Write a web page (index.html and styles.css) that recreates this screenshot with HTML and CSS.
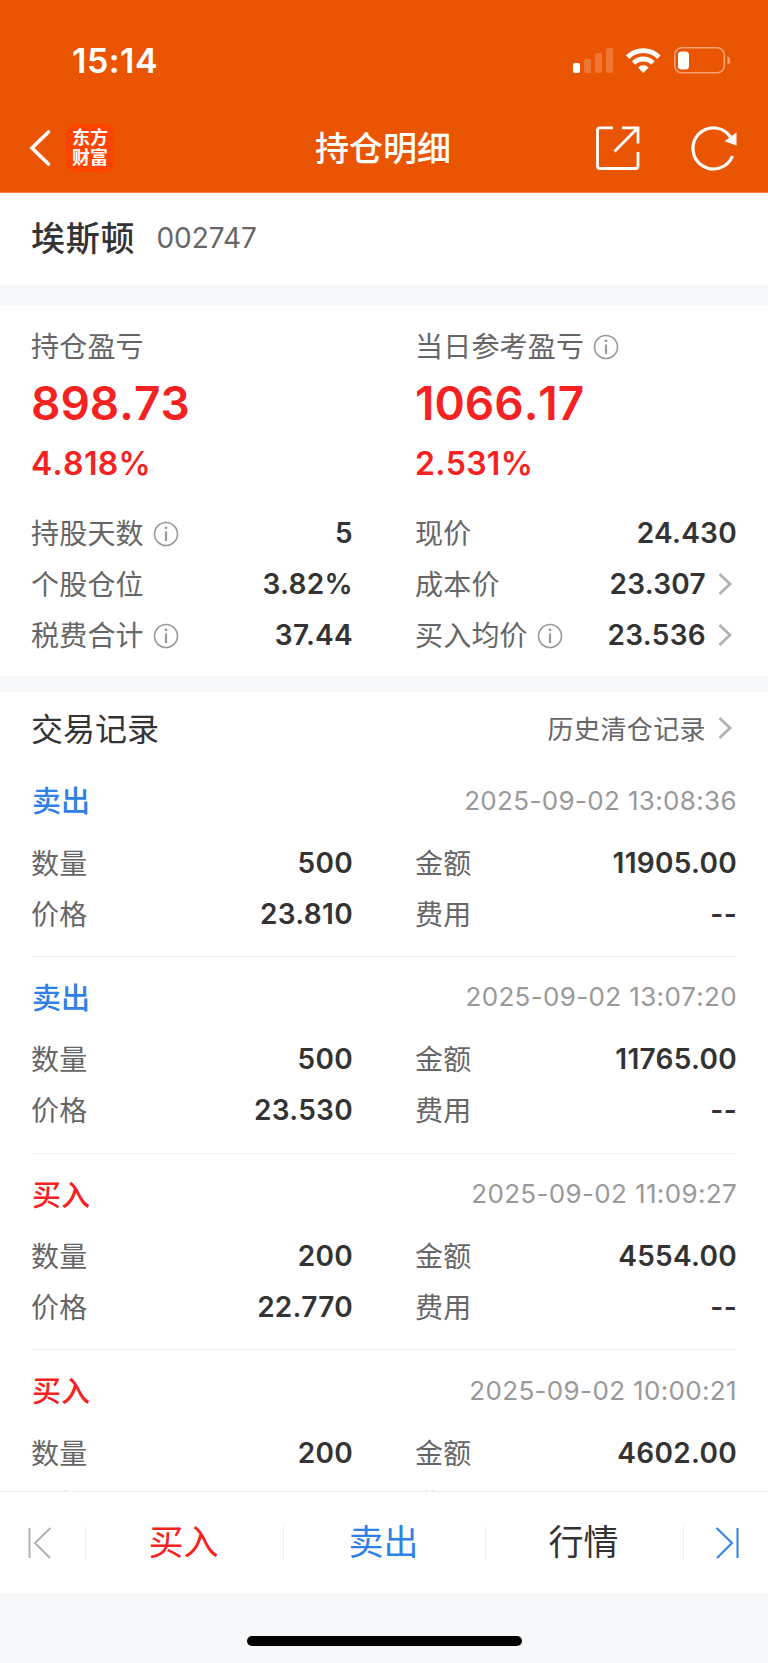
FILE: index.html
```
<!DOCTYPE html>
<html lang="zh-CN">
<head>
    <meta charset="UTF-8">
    <meta name="viewport" content="width=device-width, initial-scale=1.0">
    <title>持仓明细</title>
    <link rel="stylesheet" href="styles.css">
</head>
<body>
    <!-- Shared icons -->
    <svg class="defs" width="0" height="0">
        <symbol id="info" viewBox="0 0 26 26">
            <circle cx="13" cy="13" r="11.5" fill="none" stroke="#999" stroke-width="1.6"/>
            <path d="M13 10.5V20" stroke="#999" stroke-width="2.2"/>
            <circle cx="13" cy="6.8" r="1.4" fill="#999"/>
        </symbol>
        <symbol id="arrow" viewBox="0 0 14 24">
            <path d="M1.5 2L12 12L1.5 22" fill="none" stroke="#b2b2b2" stroke-width="2.8"/>
        </symbol>
    </svg>

    <div class="app">
        <header class="header">
            <div class="status">
                <span class="time">15:14</span>
                <svg class="status-icons" width="160" height="30" viewBox="0 0 160 30">
                    <g fill="#fff">
                        <rect x="3" y="17" width="7" height="10" rx="2"/>
                        <g opacity=".2">
                            <rect x="14" y="13" width="7" height="14" rx="2"/>
                            <rect x="25" y="7" width="7" height="20" rx="2"/>
                            <rect x="36" y="2" width="7" height="25" rx="2"/>
                        </g>
                        <path d="M56 9.3A24.5 24.5 0 0 1 90.6 9.3L87.2 12.9A19.5 19.5 0 0 0 59.4 12.9Z"/>
                        <path d="M61.9 15.3A16 16 0 0 1 84.7 15.3L81.3 18.8A11.3 11.3 0 0 0 65.3 18.8Z"/>
                        <path d="M68 21.5A7.5 7.5 0 0 1 78.6 21.5L73.3 27Z"/>
                        <rect x="108" y="5.5" width="11" height="18" rx="3.5"/>
                        <path d="M157.5 10.5a4.2 4.2 0 0 1 0 8z" opacity=".45"/>
                    </g>
                    <rect x="104.8" y="1.8" width="49.5" height="25" rx="7" fill="none" stroke="#fff" stroke-width="1.6" opacity=".45"/>
                </svg>
            </div>
            <div class="nav">
                <svg class="back" width="24" height="38" viewBox="0 0 24 38">
                    <path d="M20.5 3L4 19L20.5 35" fill="none" stroke="#fff" stroke-width="3.6" stroke-linecap="round"/>
                </svg>
                <div class="logo">东方<br>财富</div>
                <h1>持仓明细</h1>
                <div class="nav-btns">
                    <svg width="46" height="46" viewBox="0 0 46 46">
                        <g fill="none" stroke="#fff" stroke-width="2.8">
                            <path d="M19 2.8H6Q3.5 2.8 3.5 5.3V41Q3.5 43.5 6 43.5H41.5Q44 43.5 44 41V27"/>
                            <path d="M28 2.8H44V18.5M44 2.8L20.5 26.5"/>
                        </g>
                    </svg>
                    <svg width="50" height="48" viewBox="0 0 50 48">
                        <path d="M42.5 32A20.5 20.5 0 1 1 40.5 13" fill="none" stroke="#fff" stroke-width="3.2"/>
                        <path d="M34.5 17.2L46.5 8.5V21.5Z" fill="#fff"/>
                    </svg>
                </div>
            </div>
        </header>

        <section class="stock">
            <h2>埃斯顿</h2>
            <span class="code">002747</span>
        </section>

        <!-- Position summary -->
        <section class="summary">
            <div class="cols">
                <div>
                    <div class="label">持仓盈亏</div>
                    <div class="profit">898.73</div>
                    <div class="rate">4.818%</div>
                </div>
                <div>
                    <div class="label">当日参考盈亏<svg class="info"><use href="#info"/></svg></div>
                    <div class="profit">1066.17</div>
                    <div class="rate">2.531%</div>
                </div>
            </div>
            <div class="cols">
                <div class="row"><span class="label">持股天数<svg class="info"><use href="#info"/></svg></span><b>5</b></div>
                <div class="row"><span class="label">现价</span><b>24.430</b></div>
                <div class="row"><span class="label">个股仓位</span><b>3.82%</b></div>
                <div class="row"><span class="label">成本价</span><b>23.307</b><svg class="arrow"><use href="#arrow"/></svg></div>
                <div class="row"><span class="label">税费合计<svg class="info"><use href="#info"/></svg></span><b>37.44</b></div>
                <div class="row"><span class="label">买入均价<svg class="info"><use href="#info"/></svg></span><b>23.536</b><svg class="arrow"><use href="#arrow"/></svg></div>
            </div>
        </section>

        <!-- Trade records -->
        <section class="records">
            <div class="records-head">
                <h3>交易记录</h3>
                <span class="history">历史清仓记录</span>
                <svg class="arrow"><use href="#arrow"/></svg>
            </div>

            <div class="trade">
                <div class="trade-head"><span class="sell">卖出</span><time>2025-09-02 13:08:36</time></div>
                <div class="cols">
                    <div class="row"><span class="label">数量</span><b>500</b></div>
                    <div class="row"><span class="label">金额</span><b>11905.00</b></div>
                    <div class="row"><span class="label">价格</span><b>23.810</b></div>
                    <div class="row"><span class="label">费用</span><b>--</b></div>
                </div>
            </div>

            <div class="trade">
                <div class="trade-head"><span class="sell">卖出</span><time>2025-09-02 13:07:20</time></div>
                <div class="cols">
                    <div class="row"><span class="label">数量</span><b>500</b></div>
                    <div class="row"><span class="label">金额</span><b>11765.00</b></div>
                    <div class="row"><span class="label">价格</span><b>23.530</b></div>
                    <div class="row"><span class="label">费用</span><b>--</b></div>
                </div>
            </div>

            <div class="trade">
                <div class="trade-head"><span class="buy">买入</span><time>2025-09-02 11:09:27</time></div>
                <div class="cols">
                    <div class="row"><span class="label">数量</span><b>200</b></div>
                    <div class="row"><span class="label">金额</span><b>4554.00</b></div>
                    <div class="row"><span class="label">价格</span><b>22.770</b></div>
                    <div class="row"><span class="label">费用</span><b>--</b></div>
                </div>
            </div>

            <div class="trade">
                <div class="trade-head"><span class="buy">买入</span><time>2025-09-02 10:00:21</time></div>
                <div class="cols">
                    <div class="row"><span class="label">数量</span><b>200</b></div>
                    <div class="row"><span class="label">金额</span><b>4602.00</b></div>
                    <div class="row"><span class="label">价格</span><b></b></div>
                    <div class="row"><span class="label">费用</span><b></b></div>
                </div>
            </div>
        </section>

        <!-- Bottom bar -->
        <footer class="tabs">
            <div class="tab first">
                <svg width="26" height="32" viewBox="0 0 26 32">
                    <path d="M2.5 1V31M23.5 1L8 16L23 31" fill="none" stroke="#b2b2b2" stroke-width="2"/>
                </svg>
            </div>
            <div class="tab buy">买入</div>
            <div class="tab sell">卖出</div>
            <div class="tab">行情</div>
            <div class="tab last">
                <svg width="26" height="32" viewBox="0 0 26 32">
                    <path d="M23.5 1V31M2.5 1L18 16L3 31" fill="none" stroke="#2f80e7" stroke-width="2"/>
                </svg>
            </div>
        </footer>
        <div class="home"><div class="home-bar"></div></div>
    </div>
</body>
</html>
```

FILE: styles.css
```
* {
    box-sizing: border-box;
}
body {
    margin: 0;
    font-family: Inter, "Noto Sans CJK SC", sans-serif;
    color: #333;
    background-color: #f7f8fa;
}
h1, h2, h3 {
    margin: 0;
    font-weight: 500;
}
svg {
    display: block;
    flex: none;
}
.defs {
    position: absolute;
}
.app {
    width: 768px;
    height: 1663px;
    display: flex;
    flex-direction: column;
    overflow: hidden;
}

/* Header */
.header {
    flex: none;
    height: 193px;
    background-color: #ea5504;
    border-bottom: 1px solid #f07f42;
    color: #fff;
}
.status {
    height: 104px;
    padding: 18px 38px 0 72px;
    display: flex;
    align-items: center;
    justify-content: space-between;
}
.time {
    font-size: 34px;
    font-weight: 600;
    line-height: 40px;
    letter-spacing: 0.5px;
}
.status-icons {
    margin-top: -1px;
}
.nav {
    height: 88px;
    padding: 0 28px;
    display: grid;
    grid-template-columns: 38px 100px 1fr 146px;
    align-items: center;
}
.logo {
    width: 48px;
    height: 48px;
    border-radius: 9px;
    background-color: #ff4400;
    font-size: 18px;
    line-height: 20px;
    font-weight: 700;
    text-align: center;
    padding-top: 4px;
}
.nav h1 {
    font-size: 34px;
    line-height: 48px;
    padding: 2px 0 0 149px;
    white-space: nowrap;
}
.nav-btns {
    display: flex;
    justify-content: space-between;
    align-items: center;
}

/* Stock name */
.stock {
    flex: none;
    height: 92px;
    padding: 0 31px;
    display: flex;
    align-items: center;
    background-color: #fff;
}
.stock h2 {
    font-size: 34px;
    line-height: 48px;
    letter-spacing: 0.8px;
}
.code {
    margin: 0 0 2px 21px;
    font-size: 28px;
    color: #666;
}

/* Summary */
.summary {
    flex: none;
    height: 371px;
    margin: 20px 0 16px;
    padding: 18px 31px 0;
    background-color: #fff;
}
.cols {
    display: grid;
    grid-template-columns: 1fr 1fr;
    column-gap: 62px;
}
.label {
    display: flex;
    align-items: center;
    font-size: 28px;
    line-height: 48px;
    letter-spacing: 0.2px;
    color: #666;
}
.info {
    width: 26px;
    height: 26px;
    margin-left: 9px;
}
.profit {
    font-size: 46px;
    font-weight: 600;
    font-kerning: none;
    line-height: 65px;
    color: #f62222;
}
.rate {
    font-size: 32px;
    font-weight: 600;
    font-kerning: none;
    letter-spacing: 0.3px;
    line-height: 55px;
    margin-bottom: 17px;
    color: #f62222;
}
.row {
    height: 51px;
    display: flex;
    align-items: center;
}
.row b {
    margin-left: auto;
    padding-bottom: 2px;
    font-size: 28px;
    font-weight: 600;
    letter-spacing: 0.3px;
}
.arrow {
    width: 14px;
    height: 24px;
    margin: 0 5px 2px 12px;
}

/* Records */
.records {
    flex: 1;
    min-height: 0;
    overflow: hidden;
    padding: 0 31px;
    background-color: #fff;
}
.records-head {
    height: 68.4px;
    padding-top: 3px;
    display: flex;
    align-items: center;
}
.records-head h3 {
    margin-bottom: 2px;
    font-size: 32px;
    font-weight: 400;
}
.history {
    margin-left: auto;
    font-size: 26px;
    letter-spacing: 0.4px;
    color: #666;
}
.records-head .arrow {
    margin-bottom: 0;
}
.trade {
    height: 196.6px;
    padding-top: 10px;
    border-bottom: 1px solid #f0f0f0;
}
.trade-head {
    height: 60px;
    margin-bottom: 8px;
    display: flex;
    align-items: center;
    justify-content: space-between;
    font-size: 29px;
    font-weight: 500;
}
.trade-head span {
    padding: 0 0 2px 1px;
}
.trade-head time {
    font-size: 26px;
    font-weight: 400;
    font-kerning: none;
    letter-spacing: 0.35px;
    color: #999;
}
.buy {
    color: #f62222;
}
.sell {
    color: #2f80e7;
}

/* Bottom bar */
.tabs {
    flex: none;
    height: 102px;
    display: grid;
    grid-template-columns: 86px 198px 202px 198px 84px;
    align-items: center;
    background-color: #fff;
    border-top: 1px solid #eee;
    font-size: 35px;
    line-height: 30px;
}
.tab {
    height: 34px;
    padding: 0 2px 2px 0;
    display: flex;
    align-items: center;
    justify-content: center;
    border-right: 1px solid #eee;
}
.first {
    padding: 0 6px 0 0;
}
.last {
    padding: 0 0 0 2px;
    border-right: none;
}
.home {
    flex: none;
    height: 70px;
    padding-top: 43px;
}
.home-bar {
    width: 275px;
    height: 10px;
    margin: 0 auto;
    border-radius: 5px;
    background-color: #000;
}
```
